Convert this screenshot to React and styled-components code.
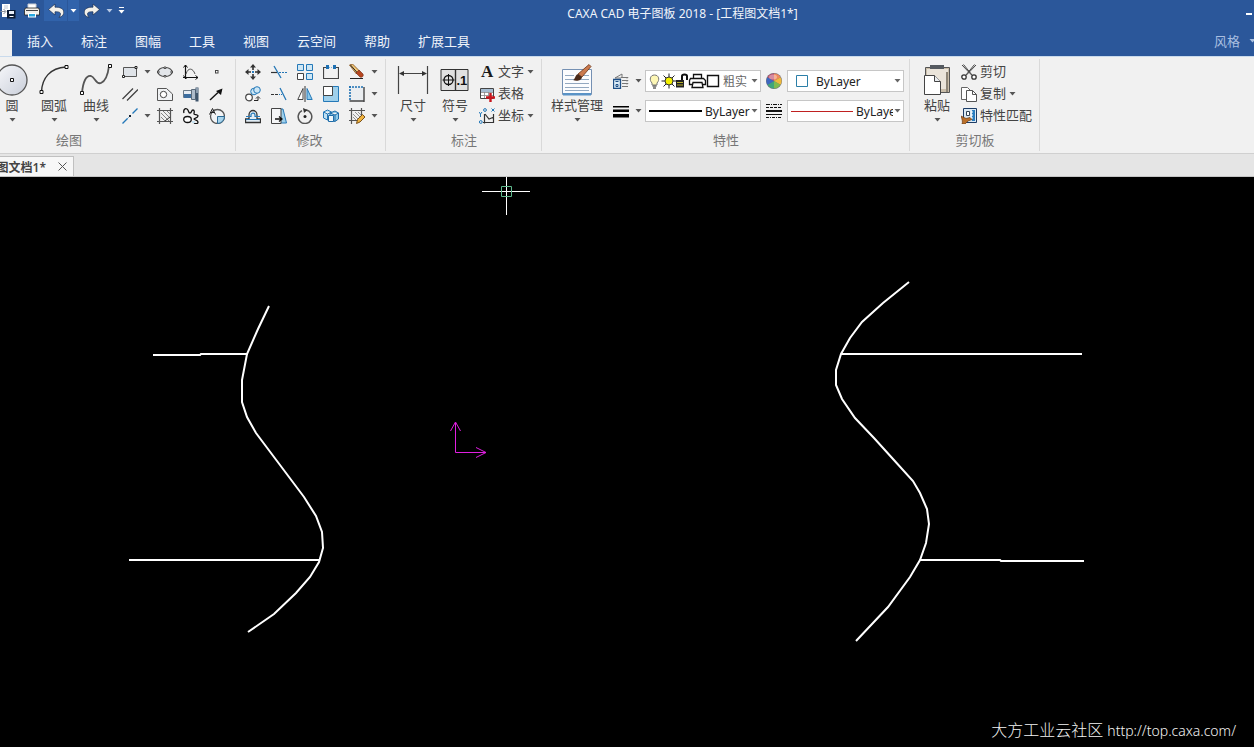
import React, { useState } from "react";
import styled, { createGlobalStyle } from "styled-components";

/* small drawings, all on a 16px grid unless noted */

const Caret = ({ color = "#555" }) => (
  <svg width="7" height="4" viewBox="0 0 7 4" aria-hidden="true">
    <path d="M0.5 0h6L3.5 3.5z" fill={color} />
  </svg>
);

const quickIcons = {
  saveAs: (
    <>
      <path d="M2 1h8v13H2z" fill="#fff" />
      <path d="M0.5 8.5h5M3.5 6l2.5 2.500-2.500 2.500" stroke="#8a9099" fill="none" />
      <path d="M4 3h4M4 5h4" stroke="#bcc4d0" />
      <rect x="7" y="7" width="8.500" height="8.500" fill="#0a1a33" />
      <rect x="9" y="8" width="5" height="3" fill="#e8eef7" />
      <path d="M9.500 13.500h4" stroke="#fff" />
    </>
  ),
  print: (
    <>
      <path d="M4 1h8v5H4z" fill="#fff" stroke="#c9cdd4" />
      <path d="M1.500 5h13l1 2v5h-15V7z" fill="#f3f0ea" stroke="#222" strokeWidth="0.800" />
      <path d="M2 7.500h12" stroke="#444" />
      <path d="M4 10h8v4.500H4z" fill="#fff" />
      <path d="M5 11h6v2.500H5z" fill="#28a9e0" />
    </>
  ),
  undo: (
    <path
      d="M7 1L0.500 6.500 7 12V8.800c4-.3 5.500.7 5.500 2.200 0 1-.5 2-1.500 3.500 3.500-1 5-3 4.800-5.500C15.500 5.500 12 4 7 4.200z"
      fill="#f4f1ea"
      stroke="#1b2f52"
      strokeWidth="0.700"
    />
  ),
  redo: (
    <path
      d="M9 1L15.500 6.500 9 12V8.800c-4-.3-5.500.7-5.500 2.200 0 1 .5 2 1.500 3.500-3.500-1-5-3-4.800-5.500C0.500 5.500 4 4 9 4.200z"
      fill="#f4f1ea"
      stroke="#1b2f52"
      strokeWidth="0.700"
    />
  ),
};

const drawIcons = {
  rect: (
    <>
      <path d="M1.500 3.500h13v9h-13z" fill="#dfe3e8" stroke="#555" />
      <path d="M13 2.500h2v2h-2zM0.500 11.500h2v2h-2z" fill="#fff" stroke="#222" />
    </>
  ),
  parallel: <path d="M0.500 13L11 2.500M5 14.500L16 3.500" stroke="#444" strokeWidth="1.300" />,
  line: (
    <>
      <path d="M0.500 15.500l5-5M10.500 5.500l5-5" stroke="#2377b8" strokeWidth="1.400" />
      <path d="M5.500 10.500l1-1" stroke="#2377b8" />
      <rect x="7" y="7" width="2" height="2" fill="#123" />
    </>
  ),
  ellipse: (
    <>
      <ellipse cx="8" cy="8" rx="7" ry="4.500" fill="#e3e6ea" stroke="#555" strokeWidth="1.200" />
      <path d="M7 3h2v1.500H7zM7 11.500h2V13H7zM0.500 7H2v2H0.500zM14 7h1.500v2H14z" fill="#fff" stroke="#333" strokeWidth="0.800" />
    </>
  ),
  contour: (
    <>
      <path d="M0.500 2.500h9l6 5.500v6.500h-15z" fill="#f0f2f4" stroke="#555" />
      <circle cx="6.500" cy="8.500" r="3.200" fill="#fff" stroke="#444" />
    </>
  ),
  hatch: (
    <>
      <path d="M0 2.500h16M0 13.500h16M2.500 0v16M13.500 0v16" stroke="#555" strokeWidth="1.200" />
      <path d="M4 5l8 8M4 9l4 4M6 3l7 7M10 3l3 3" stroke="#777" strokeWidth="0.900" />
      <path d="M8 13l5-4" stroke="#333" />
    </>
  ),
  axes: (
    <>
      <path d="M2.500 1v14M0 13.500h15" stroke="#111" strokeWidth="1.200" />
      <path d="M0.500 3.500l2-2.500 2 2.500M12.500 11.500l2.500 2-2.500 2M0.500 11.500l2 3 2-1" stroke="#111" fill="none" />
      <path d="M3 10c2-7 7-6 9 0" stroke="#555" fill="none" />
    </>
  ),
  shaft: (
    <>
      <path d="M0.500 4.500h8v7h-8z" fill="#e7edf4" stroke="#6b7a89" />
      <path d="M1 8h8v4H1z" fill="#3c6d9f" />
      <path d="M8.500 3.500h4v10h-4z" fill="#aebccb" stroke="#5c6b7a" />
      <path d="M12.500 1.500h3v14h-3z" fill="#3f556c" />
      <path d="M14 2v5" stroke="#d7e3ef" />
    </>
  ),
  wave: (
    <>
      <path d="M1 5c-1-3 1-5 3-4s1 4 3 4 1-3 3-3 1 3 1 4 4 0 4 2-4 2-4 3 4 1 4 3-2 2-4 1" stroke="#111" fill="none" strokeWidth="1.300" />
      <ellipse cx="4.500" cy="11.500" rx="3.800" ry="3" fill="#fff" stroke="#111" strokeWidth="1.300" />
      <path d="M9 13h3v2H9z" fill="#c8e4f2" />
    </>
  ),
  point: <rect x="6.500" y="6.500" width="2.500" height="2.500" fill="#fff" stroke="#444" />,
  arrow: (
    <>
      <path d="M1 14L9 6.500" stroke="#111" strokeWidth="1.400" />
      <path d="M13.500 2.500L12 9 7 5z" fill="#111" />
    </>
  ),
  localView: (
    <>
      <circle cx="8.500" cy="8.500" r="7" fill="#f2f4f6" stroke="#555" strokeWidth="1.300" />
      <path d="M8.500 8.500h7a7 7 0 0 1-7 7z" fill="#a8d4ec" stroke="#2c6a94" />
      <path d="M0.500 6.500L3.500 0.500l3 6M1.500 4.500h4" stroke="#222" fill="none" />
    </>
  ),
};

const modifyIcons = {
  move: (
    <>
      <path d="M8 3v3M8 10v3M3 8h3M10 8h3" stroke="#333" strokeWidth="1.600" />
      <path d="M8 0l3 3.500H5zM8 16l3-3.500H5zM0 8l3.500-3v6zM16 8l-3.500-3v6z" fill="#333" />
      <rect x="7" y="7" width="2" height="2" fill="#2a7ec0" />
    </>
  ),
  trim: (
    <>
      <path d="M0 8.500h6" stroke="#333" strokeWidth="1.200" />
      <path d="M8 8.500h8" stroke="#2376b6" strokeDasharray="2 1" />
      <path d="M3 2l7 12" stroke="#2376b6" strokeWidth="1.300" />
    </>
  ),
  array: (
    <>
      <path d="M0.500 0.500h6v6h-6zM9.500 0.500h6v6h-6zM9.500 9.500h6v6h-6z" fill="#cfe7f5" stroke="#2579b8" />
      <path d="M0.500 9.500h6v6h-6z" fill="#fff" stroke="#444" />
    </>
  ),
  breakPoint: (
    <>
      <path d="M4 3.500H0.500v11h15v-11H12" stroke="#444" fill="none" strokeWidth="1.200" />
      <path d="M6 3.500h4" stroke="#83b8dc" strokeDasharray="1 1" />
      <path d="M3 1h3v4H3zM10 1h3v4h-3z" fill="#1d70b3" />
    </>
  ),
  erase: (
    <>
      <path d="M0.500 1l3-1 7 7-3 3z" fill="#f3c877" stroke="#7c4a18" strokeWidth="0.800" />
      <path d="M1.500 1l7 8" stroke="#222" />
      <path d="M7 9l3-3 4 4c1 2-1 4-3 3z" fill="#b6461f" stroke="#702511" strokeWidth="0.600" />
      <path d="M1 14.500h13" stroke="#222" />
    </>
  ),
  copy: (
    <>
      <circle cx="4" cy="11.500" r="3.300" fill="#fff" stroke="#444" strokeWidth="1.200" />
      <circle cx="9" cy="5.500" r="3.300" fill="#cce6f5" stroke="#2579b8" />
      <circle cx="12" cy="4" r="3.300" fill="#cce6f5" stroke="#2579b8" />
      <path d="M9 14.500h4v-3M11 12.500l2-2 2 2" stroke="#222" fill="none" />
    </>
  ),
  extend: (
    <>
      <path d="M0 8.500h7" stroke="#333" strokeWidth="1.200" strokeDasharray="3 1" />
      <path d="M8 8.500h3" stroke="#2376b6" strokeDasharray="1 1" />
      <path d="M9 2l6 12" stroke="#2376b6" strokeWidth="1.300" />
    </>
  ),
  mirror: (
    <>
      <path d="M6 2.500v11H0.800z" fill="#fff" stroke="#444" />
      <path d="M10 2.500v11h5.200z" fill="#8cc8ea" stroke="#2579b8" />
      <path d="M8 0v16" stroke="#333" />
    </>
  ),
  scale: (
    <>
      <path d="M0.500 0.500h15v15h-15z" fill="#9fd0eb" stroke="#2579b8" />
      <path d="M0.500 0.500h9v9h-9z" fill="#fff" stroke="#444" />
    </>
  ),
  stretch: (
    <>
      <path d="M1 1h14v14H1z" fill="#eaedf0" />
      <path d="M15 1v15M0.500 15h15" stroke="#444" strokeWidth="1.400" />
      <path d="M0 1h15M1 0v15" stroke="#1d70b3" strokeWidth="1.600" strokeDasharray="2 1" />
    </>
  ),
  offset: (
    <>
      <path d="M0.500 14.500h15v-3.500h-3.500V7c0-6-8-6-8 0v4H0.500z" fill="#e2edf5" stroke="#333" strokeWidth="1.300" />
      <path d="M1 8.500h5V7c0-2.500 4-2.500 4 0v1.500h5M1 11.500h14" fill="none" stroke="#2579b8" strokeWidth="1.200" />
    </>
  ),
  chamfer: (
    <>
      <path d="M9 1h3l3.500 14H9z" fill="#9fd0eb" stroke="#2579b8" />
      <path d="M0.500 0.500H10v15H0.500z" fill="#f5f6f7" stroke="#444" />
      <path d="M4 11h6M8 8.500l3 2.500-3 2.500" fill="none" stroke="#111" strokeWidth="1.300" />
    </>
  ),
  rotate: (
    <>
      <path d="M9 2A6.800 6.800 0 1 1 5 2.600" fill="none" stroke="#555" strokeWidth="1.500" />
      <path d="M6 0l4.500 2L7 5z" fill="#333" />
      <circle cx="8" cy="8.500" r="1.500" fill="#222" />
    </>
  ),
  block: (
    <>
      <path d="M0.500 4l4-2 4 2v6l-4 2-4-2zM0.500 4l4 2 4-2M4.500 6v6" fill="#bfe0f2" stroke="#2579b8" />
      <path d="M7 5l5-2 3.500 2v6l-3.500 2.500L7 12zM7 5l5 2 3.500-2M12 7v6" fill="#8ecaea" stroke="#1f6ca8" />
      <path d="M5.500 7.500h5v6h-5z" fill="#eff7fb" stroke="#1f6ca8" />
    </>
  ),
  editHatch: (
    <>
      <path d="M0 2.500h16M0 12.500h9M2.500 0v16M12.500 0v8" stroke="#555" strokeWidth="1.200" />
      <path d="M4 6l6 6M4 9l3 3M6 4l6 6M9 4l3 3" stroke="#888" strokeWidth="0.900" />
      <path d="M7.500 15.500l1-4 5-5 2.500 2.500-5 5z" fill="#f0b440" stroke="#6d430d" strokeWidth="0.900" />
    </>
  ),
};

const annotateIcons = {
  text: (
    <text x="2" y="13" fontFamily="Liberation Serif, serif" fontSize="17" fontWeight="700" fill="#1a1a1a">
      A
    </text>
  ),
  table: (
    <>
      <path d="M1.500 2.500h13v10h-13z" fill="#fff" stroke="#444" />
      <path d="M2 3h12v3H2z" fill="#a6bdd2" />
      <path d="M2 6.500h12M2 9.500h12M5.500 6v6M9.500 6v6" stroke="#888" strokeWidth="0.800" />
      <path d="M11.500 7v9M7 11.500h9" stroke="#c8161d" strokeWidth="2.400" />
    </>
  ),
  coord: (
    <>
      <path d="M5.500 6v9.500M4 14.500h11M6 6l4 5 5-2M14.500 6v9" fill="none" stroke="#333" strokeWidth="1.200" />
      <path d="M0 4l1.500 2L3 4M1.500 6v3M12.500 0.500l3 3M15.500 0.500l-3 3" fill="none" stroke="#2579b8" />
      <circle cx="6" cy="2" r="1.400" fill="none" stroke="#2579b8" />
      <circle cx="1.800" cy="14" r="1.400" fill="none" stroke="#2579b8" />
    </>
  ),
};

const propertyIcons = {
  layers: (
    <>
      <path d="M2 5l7-4v3M2 5h6M8 4.500h7l-1 1M9 7.500h6l-1 1M9 10.500h6l-1 1M9 13.500h6" fill="none" stroke="#777" />
      <path d="M0.500 6.500h7v9h-7z" fill="#dcecf7" stroke="#1f4f86" strokeWidth="1.300" />
      <path d="M2.500 8.500h3M3 11.500h2v2H3z" fill="none" stroke="#1f4f86" />
    </>
  ),
  lineWidth: (
    <path d="M0 3h16v1.500H0zM0 6.500h16v2.500H0zM0 11h16v3.500H0z" fill="#000" />
  ),
  colorWheel: (
    <>
      <circle cx="8" cy="8" r="8" fill="#6d6f78" />
      <path d="M8 8L8 0.500A7.500 7.500 0 0 1 14.500 4.200z" fill="#f08a5c" />
      <path d="M8 8L14.500 4.200A7.500 7.500 0 0 1 14.500 11.800z" fill="#f0b93c" />
      <path d="M8 8L14.500 11.800A7.500 7.500 0 0 1 8 15.500z" fill="#7fbb4e" />
      <path d="M8 8L8 15.500A7.500 7.500 0 0 1 1.500 11.800z" fill="#3fa57c" />
      <path d="M8 8L1.500 11.800A7.500 7.500 0 0 1 1.500 4.200z" fill="#3d68c1" />
      <path d="M8 8L1.500 4.200A7.500 7.500 0 0 1 8 0.500z" fill="#c0506e" />
      <ellipse cx="7" cy="4" rx="4" ry="2.500" fill="#fff" opacity="0.350" />
    </>
  ),
  lineType: (
    <>
      <path d="M0 1.500h16" stroke="#111" strokeDasharray="4 1 1 1" />
      <path d="M0 4.500h16" stroke="#111" strokeDasharray="3 1" />
      <path d="M0 8h16" stroke="#111" strokeWidth="2" />
      <path d="M0 11.500h16" stroke="#111" />
      <path d="M0 14.500h16" stroke="#111" strokeDasharray="3 1 1 1" />
    </>
  ),
};

const clipIcons = {
  cut: (
    <>
      <path d="M1 1l10 10.500M15 1L5 11.500M2.500 0.500l9 11M13.500 0.500l-9 11" stroke="#444" />
      <circle cx="3" cy="13" r="2.200" fill="#fff" stroke="#333" strokeWidth="1.300" />
      <circle cx="13" cy="13" r="2.200" fill="#fff" stroke="#333" strokeWidth="1.300" />
    </>
  ),
  duplicate: (
    <>
      <path d="M0.500 1.500h6l3 3v9h-9z" fill="#fff" stroke="#666" />
      <path d="M5.500 4.500h6l4 4v7h-10z" fill="#fff" stroke="#555" />
      <path d="M11.500 4.500v4h4" fill="none" stroke="#555" />
    </>
  ),
  match: (
    <>
      <path d="M2.500 0.500h13v14h-13z" fill="#dbeaf5" stroke="#1c3c66" />
      <path d="M5.500 3.500h3v4h-3z" fill="#fff" stroke="#345" />
      <path d="M11 2h3v11h-3z" fill="#2a7ec0" />
      <path d="M10 4h2M10 7h2M10 10h2" stroke="#fff" />
      <path d="M0 8l5 2.500 4-1 2 2-4 1.500-3 3H1c1-2 0-5-1-8z" fill="#b9702b" stroke="#6c3a10" strokeWidth="0.700" />
    </>
  ),
};

const bigIcons = {
  circle: (
    <>
      <defs>
        <linearGradient id="disc" x1="0" y1="0" x2="1" y2="1">
          <stop offset="0" stopColor="#f7f8fb" />
          <stop offset="1" stopColor="#c9ced9" />
        </linearGradient>
      </defs>
      <circle cx="16" cy="16" r="15" fill="url(#disc)" stroke="#555" strokeWidth="1.300" />
      <path d="M14.500 14.500h3v3h-3z" fill="#fff" stroke="#111" />
    </>
  ),
  arc: (
    <>
      <path d="M3.500 28C4 14 12 4 28 3" fill="none" stroke="#333" strokeWidth="1.400" />
      <path d="M2 26.500h3v3H2zM27 1.500h3v3h-3z" fill="#fff" stroke="#111" />
    </>
  ),
  spline: (
    <>
      <path d="M2 29C3 18 6 11 11 12c4 1 5 9 10 7 5-2 7-9 8-17" fill="none" stroke="#555" strokeWidth="1.800" />
      <path d="M0.500 27.500h3v3h-3zM28.500 0.500h3v3h-3z" fill="#fff" stroke="#111" />
    </>
  ),
  dimension: (
    <>
      <path d="M1.500 2v28M30.500 2v28M3 9.500h26" stroke="#444" strokeWidth="1.200" />
      <path d="M2 9.500l5-2.500v5zM30 9.500l-5-2.500v5z" fill="#333" />
    </>
  ),
  symbol: (
    <>
      <path d="M2 5.500h27v21H2z" fill="#e1e1e1" stroke="#333" />
      <path d="M16.500 5v22" stroke="#333" strokeWidth="1.400" />
      <circle cx="9.500" cy="16" r="4.500" fill="none" stroke="#111" strokeWidth="1.300" />
      <path d="M3.500 16h12M9.500 10v12" stroke="#111" />
      <text x="17.500" y="21" fontFamily="Liberation Sans, sans-serif" fontSize="13" fontWeight="700" fill="#111">.1</text>
    </>
  ),
  style: (
    <>
      <path d="M1.500 5.500h29v25h-29z" fill="#fbfcfe" stroke="#7590b3" />
      <path d="M2 29h28v2.500H2z" fill="#5a93c6" />
      <path d="M4 11.500h9M4 15.500h10M4 19.500h24M4 23.500h24M4 26.500h24M19 15.500h9M22 11.500h6" stroke="#93a8c0" />
      <path d="M17 10L28 0.500l2 2L21 13z" fill="#cb7a4e" stroke="#6b3316" strokeWidth="0.800" />
      <path d="M12 16c2 0 2-5 5-6l4 3c0 3-5 5-9 3z" fill="#4a2a1a" />
    </>
  ),
  paste: (
    <>
      <path d="M4.500 3.500h24v25h-24z" fill="#c9bda9" stroke="#555" />
      <path d="M9 1h14v4H9z" fill="#555a60" />
      <path d="M6 5h21v20H6z" fill="#eae4da" />
      <path d="M26 8v20" stroke="#8d8577" strokeWidth="2" />
      <path d="M3.500 11.500h10l6 6v13h-16z" fill="#fff" stroke="#444" />
      <path d="M13.500 11.500v6h6" fill="#e9ecef" stroke="#444" />
    </>
  ),
};

const layerStates = (
  <>
    <path d="M3 10C0 7 1 2 5.500 2S11 7 8 10v2H3z" fill="#fdf7b5" stroke="#777" />
    <path d="M3.500 13h4M4 15h3" stroke="#666" strokeWidth="1.300" />
    <path d="M20 0.500v15M12.500 8h15M14.500 2.500l11 11M25.500 2.500l-11 11" stroke="#222" />
    <circle cx="20" cy="8" r="4" fill="#f3f000" stroke="#333" />
    <path d="M27 7h8v7.500h-8z" fill="#222" />
    <path d="M28 9.500h6M28 12h6" stroke="#b9b22c" />
    <path d="M33 7V3c0-2 5-2 5 0v4" fill="none" stroke="#111" strokeWidth="2" />
    <path d="M44.500 5V1.500h8V5M41.500 5.500h13l2 2v4h-16v-4z" fill="#fff" stroke="#111" strokeWidth="1.300" />
    <path d="M44 9.500h9l1 5H43z" fill="#fff" stroke="#111" strokeWidth="1.300" />
    <path d="M58.500 2.500h11v11h-11z" fill="#fff" stroke="#111" strokeWidth="1.400" />
  </>
);

const Icon = ({ art, size = 16 }) => (
  <svg width={size} height={size} viewBox={`0 0 ${size} ${size}`} aria-hidden="true">
    {art}
  </svg>
);

const menus = ["插入", "标注", "图幅", "工具", "视图", "云空间", "帮助", "扩展工具"];

// each row: tools, `true` marks a drop-down after the icon
const drawRows = [
  ["rect", true, "ellipse", "axes", "point"],
  ["parallel", false, "contour", "shaft", "arrow"],
  ["line", true, "hatch", "wave", "localView"],
];

const modifyRows = [
  ["move", "trim", "array", "breakPoint", "erase", true],
  ["copy", "extend", "mirror", "scale", "stretch", true],
  ["offset", "chamfer", "rotate", "block", "editHatch", true],
];

const splines = [
  "269,129 258,152 247,177 242,203 242,225 247,240 256,256 280,288 304,320 316,339 322,355 323,371 319,385 310,400 296,416 274,437 248,455",
  "909,105 883,126 862,145 850,161 841,177 836,193 836,208 842,222 855,241 874,261 893,282 913,304 920,316 927,332 929,347 926,366 920,383 910,400 888,430 856,464",
];

const edges = [
  "153,178 200,178 201,177 248,177",
  "129,383 320,383",
  "841,177 1082,177",
  "920,383 1000,383 1001,384 1084,384",
];

function Big({ icon, label, wide }) {
  return (
    <BigButton type="button" $wide={wide}>
      <Icon art={bigIcons[icon]} size={32} />
      <span>{label}</span>
      <Caret />
    </BigButton>
  );
}

function ToolRows({ rows, art }) {
  return (
    <div>
      {rows.map((row, i) => (
        <Row key={i}>
          {row.map((tool, j) =>
            typeof tool === "string" ? (
              <ToolButton key={tool} type="button" aria-label={tool}>
                <Icon art={art[tool]} />
              </ToolButton>
            ) : (
              <DropButton key={j} type="button" aria-label="more" disabled={!tool}>
                {tool && <Caret />}
              </DropButton>
            )
          )}
        </Row>
      ))}
    </div>
  );
}

function Labelled({ art, label, drop }) {
  return (
    <LabelButton type="button">
      <Icon art={art} />
      <span>{label}</span>
      {drop && <Caret />}
    </LabelButton>
  );
}

function Combo({ label, sample, options, muted }) {
  const [value, setValue] = useState(options[0]);
  return (
    <ComboBox>
      {sample}
      <ComboSelect
        aria-label={label}
        $muted={muted}
        value={value}
        onChange={(e) => setValue(e.target.value)}
      >
        {options.map((o) => (
          <option key={o}>{o}</option>
        ))}
      </ComboSelect>
      <Caret color="#666" />
    </ComboBox>
  );
}

export default function App() {
  return (
    <>
      <GlobalStyle />
      <Window>
        <TitleBar>
          <QuickAccess>
            <QuickButton type="button" aria-label="save as">
              <Icon art={quickIcons.saveAs} />
            </QuickButton>
            <QuickButton type="button" aria-label="print">
              <Icon art={quickIcons.print} />
            </QuickButton>
            <QuickButton type="button" aria-label="undo" $active>
              <Icon art={quickIcons.undo} />
            </QuickButton>
            <QuickDrop type="button" aria-label="undo list" $active>
              <Caret color="#fff" />
            </QuickDrop>
            <QuickButton type="button" aria-label="redo">
              <Icon art={quickIcons.redo} />
            </QuickButton>
            <QuickDrop type="button" aria-label="redo list">
              <Caret color="#b8c9e4" />
            </QuickDrop>
            <QuickDrop type="button" aria-label="customize">
              <svg width="7" height="7" viewBox="0 0 7 7">
                <path d="M1 0.500h5" stroke="#fff" />
                <path d="M0.500 3h6L3.500 6.500z" fill="#fff" />
              </svg>
            </QuickDrop>
          </QuickAccess>
          <Title>CAXA CAD 电子图板 2018 - [工程图文档1*]</Title>
          <Minimize type="button" aria-label="minimize">
            <svg width="6" height="2">
              <rect width="6" height="2" fill="#fff" />
            </svg>
          </Minimize>
        </TitleBar>

        <MenuBar>
          <CurrentMenu />
          {menus.map((menu) => (
            <MenuButton key={menu} type="button">
              {menu}
            </MenuButton>
          ))}
          <ThemeButton type="button">
            风格
            <Caret color="#a9bfe0" />
          </ThemeButton>
        </MenuBar>

        <Ribbon>
          <DrawGroup>
            <Tools>
              <Big icon="circle" label="圆" />
              <Big icon="arc" label="圆弧" />
              <Big icon="spline" label="曲线" />
              <ToolRows rows={drawRows} art={drawIcons} />
            </Tools>
            <GroupName>绘图</GroupName>
          </DrawGroup>

          <ModifyGroup>
            <Tools>
              <ToolRows rows={modifyRows} art={modifyIcons} />
            </Tools>
            <GroupName>修改</GroupName>
          </ModifyGroup>

          <Group>
            <Tools>
              <Big icon="dimension" label="尺寸" />
              <Big icon="symbol" label="符号" />
              <div>
                <Labelled art={annotateIcons.text} label="文字" drop />
                <Labelled art={annotateIcons.table} label="表格" />
                <Labelled art={annotateIcons.coord} label="坐标" drop />
              </div>
            </Tools>
            <GroupName>标注</GroupName>
          </Group>

          <Group>
            <Tools>
              <Big icon="style" label="样式管理" wide />
              <Properties>
                <ToolButton type="button" aria-label="layers">
                  <Icon art={propertyIcons.layers} />
                </ToolButton>
                <DropButton type="button" aria-label="layer list">
                  <Caret />
                </DropButton>
                <Combo
                  label="图层"
                  muted
                  options={["粗实", "细实"]}
                  sample={
                    <svg width="71" height="16" viewBox="0 0 71 16">
                      {layerStates}
                    </svg>
                  }
                />
                <ToolButton type="button" aria-label="color">
                  <Icon art={propertyIcons.colorWheel} />
                </ToolButton>
                <Combo
                  label="颜色"
                  options={["ByLayer", "ByBlock"]}
                  sample={
                    <svg width="22" height="12" viewBox="0 0 22 12">
                      <path d="M5.500 0.500h11v11h-11z" fill="#fff" stroke="#2b7fa8" />
                    </svg>
                  }
                />
                <ToolButton type="button" aria-label="line width">
                  <Icon art={propertyIcons.lineWidth} />
                </ToolButton>
                <DropButton type="button" aria-label="line width list">
                  <Caret />
                </DropButton>
                <Combo
                  label="线宽"
                  options={["ByLayer", "ByBlock"]}
                  sample={<Stroke $length={53} $weight={2} $color="#000" />}
                />
                <ToolButton type="button" aria-label="line type">
                  <Icon art={propertyIcons.lineType} />
                </ToolButton>
                <Combo
                  label="线型"
                  options={["ByLayer", "ByBlock"]}
                  sample={<Stroke $length={62} $weight={1} $color="#c02020" />}
                />
              </Properties>
            </Tools>
            <GroupName>特性</GroupName>
          </Group>

          <Group>
            <Tools>
              <Big icon="paste" label="粘贴" />
              <div>
                <Labelled art={clipIcons.cut} label="剪切" />
                <Labelled art={clipIcons.duplicate} label="复制" drop />
                <Labelled art={clipIcons.match} label="特性匹配" />
              </div>
            </Tools>
            <GroupName>剪切板</GroupName>
          </Group>
        </Ribbon>

        <FileTabs>
          <FileTab>
            <span>工程图文档1*</span>
            <CloseButton type="button" aria-label="close">
              <svg width="9" height="9" viewBox="0 0 9 9">
                <path d="M0.500 0.500l8 8M8.500 0.500l-8 8" stroke="#555" />
              </svg>
            </CloseButton>
          </FileTab>
        </FileTabs>

        <Canvas>
          <svg width="100%" height="100%">
            <g fill="none" stroke="#fff" strokeWidth="2">
              {[...splines, ...edges].map((points) => (
                <polyline key={points} points={points} />
              ))}
            </g>
            <path d="M482 14.500h48M506.500 0v38" stroke="#fff" />
            <path d="M501.500 9.500h10v10h-10z" fill="none" stroke="#5fb98d" />
            <path
              d="M455.500 246v29.500H486M450.500 254l5-9 5 9M476 270.500l10 5-10 5"
              fill="none"
              stroke="#e01fe0"
            />
          </svg>
          <Watermark>
            大方工业云社区 <a href="http://top.caxa.com/">http://top.caxa.com/</a>
          </Watermark>
        </Canvas>
      </Window>
    </>
  );
}

const GlobalStyle = createGlobalStyle`
  * {
    box-sizing: border-box;
  }
  body {
    margin: 0;
    overflow: hidden;
    font-family: "Noto Sans", "Noto Sans CJK SC", sans-serif;
    font-size: 13px;
    color: #444;
  }
  button, select {
    margin: 0;
    padding: 0;
    border: none;
    background: none;
    font: inherit;
    color: inherit;
  }
  svg {
    display: block;
    flex: none;
  }
`;

const Window = styled.div`
  display: flex;
  flex-direction: column;
  height: 100vh;
  overflow: hidden;
`;

const TitleBar = styled.header`
  display: flex;
  height: 28px;
  flex: none;
  background: #2b579a;
  color: #f0f4fa;
`;

const QuickAccess = styled.div`
  display: flex;
  gap: 1px;
  margin-left: -4px;
`;

const QuickButton = styled.button`
  display: flex;
  align-items: center;
  justify-content: center;
  width: 23px;
  height: 21px;
  background: ${(p) => (p.$active ? "#3163ab" : "none")};
`;

const QuickDrop = styled(QuickButton)`
  width: 11px;
`;

const Title = styled.h1`
  flex: 1;
  margin: 0;
  font-size: 12px;
  font-weight: 400;
  line-height: 27px;
  text-align: center;
  white-space: nowrap;
`;

const Minimize = styled.button`
  display: flex;
  align-items: center;
  justify-content: flex-end;
  width: 16px;
  padding-right: 2px;
`;

const MenuBar = styled.nav`
  display: flex;
  align-items: flex-end;
  height: 28px;
  flex: none;
  overflow: hidden;
  background: #2b579a;
  color: #f0f4fa;
`;

const CurrentMenu = styled.div`
  width: 12px;
  height: 26px;
  margin-right: 1px;
  background: #f1f1f1;
`;

const MenuButton = styled.button`
  height: 28px;
  padding: 0 14px 3px;
  white-space: nowrap;
`;

const ThemeButton = styled.button`
  display: flex;
  align-items: center;
  gap: 9px;
  height: 28px;
  margin-left: auto;
  margin-right: -2px;
  padding-bottom: 3px;
  color: #a9bfe0;
`;

const Ribbon = styled.section`
  display: flex;
  flex: none;
  overflow: hidden;
  padding: 2px 0;
  border-top: 1px solid #c9daec;
  border-bottom: 1px solid #d0d0d0;
  background: #f1f1f1;
`;

const Group = styled.div`
  display: flex;
  flex-direction: column;
  flex: none;
  padding: 0 5px 0 6px;
  border-right: 1px solid #d9d9d9;
`;

/* the start of this group is scrolled out of the window */
const DrawGroup = styled(Group)`
  width: 334px;
  margin-left: -98px;
  align-items: flex-end;
`;

const ModifyGroup = styled(Group)`
  padding: 0 6px 0 4px;
`;

const Tools = styled.div`
  display: flex;
  height: 72px;
  padding-top: 2px;
`;

const GroupName = styled.div`
  width: 100%;
  line-height: 19px;
  padding-bottom: 1px;
  text-align: center;
  color: #777;
`;

const BigButton = styled.button`
  display: flex;
  flex-direction: column;
  align-items: center;
  width: ${(p) => (p.$wide ? 58 : 42)}px;
  padding-top: 3px;
  white-space: nowrap;
  span {
    line-height: 18px;
    margin-bottom: 4px;
  }
`;

const Row = styled.div`
  display: flex;
`;

const ToolButton = styled.button`
  display: flex;
  align-items: center;
  justify-content: center;
  width: 26px;
  height: 22px;
`;

const DropButton = styled(ToolButton)`
  width: 9px;
`;

const LabelButton = styled.button`
  display: flex;
  align-items: center;
  gap: 3px;
  height: 22px;
  padding: 0 2px 0 3px;
  white-space: nowrap;
  span {
    padding-bottom: 3px;
  }
`;

const Properties = styled.div`
  display: grid;
  grid-template-columns: 26px 11px 116px 26px 117px;
  grid-auto-rows: 22px;
  align-content: start;
  row-gap: 8px;
  padding: 9px 0 0 2px;
`;

const ComboBox = styled.div`
  display: flex;
  align-items: center;
  gap: 1px;
  min-width: 0;
  height: 22px;
  padding: 0 2px 0 3px;
  border: 1px solid #c6c6c6;
  background: #fff;
`;

const ComboSelect = styled.select`
  flex: 1;
  min-width: 0;
  height: 20px;
  padding-left: 2px;
  appearance: none;
  font-size: 12px;
  color: ${(p) => (p.$muted ? "#666" : "#222")};
  outline: none;
`;

const Stroke = styled.span`
  flex: none;
  width: ${(p) => p.$length}px;
  height: ${(p) => p.$weight}px;
  background: ${(p) => p.$color};
`;

const FileTabs = styled.div`
  display: flex;
  align-items: flex-end;
  height: 23px;
  flex: none;
  border-bottom: 1px solid #c4c4c4;
  background: #e5e5e5;
`;

const FileTab = styled.div`
  display: flex;
  align-items: center;
  justify-content: flex-end;
  gap: 8px;
  width: 110px;
  height: 20px;
  margin-left: -36px;
  padding-right: 2px;
  border: 1px solid #c0c0c0;
  border-bottom: none;
  background: #f7f7f7;
  font-size: 12px;
  font-weight: 600;
  white-space: nowrap;
`;

const CloseButton = styled.button`
  display: flex;
  align-items: center;
  justify-content: center;
  width: 17px;
  height: 17px;
`;

const Canvas = styled.main`
  position: relative;
  flex: 1;
  min-height: 0;
  background: #000;
`;

const Watermark = styled.div`
  position: absolute;
  right: 18px;
  bottom: 5px;
  font-size: 16px;
  font-weight: 300;
  line-height: 22px;
  color: #f4f4f4;
  a {
    font-size: 14px;
    color: inherit;
    text-decoration: none;
  }
`;
